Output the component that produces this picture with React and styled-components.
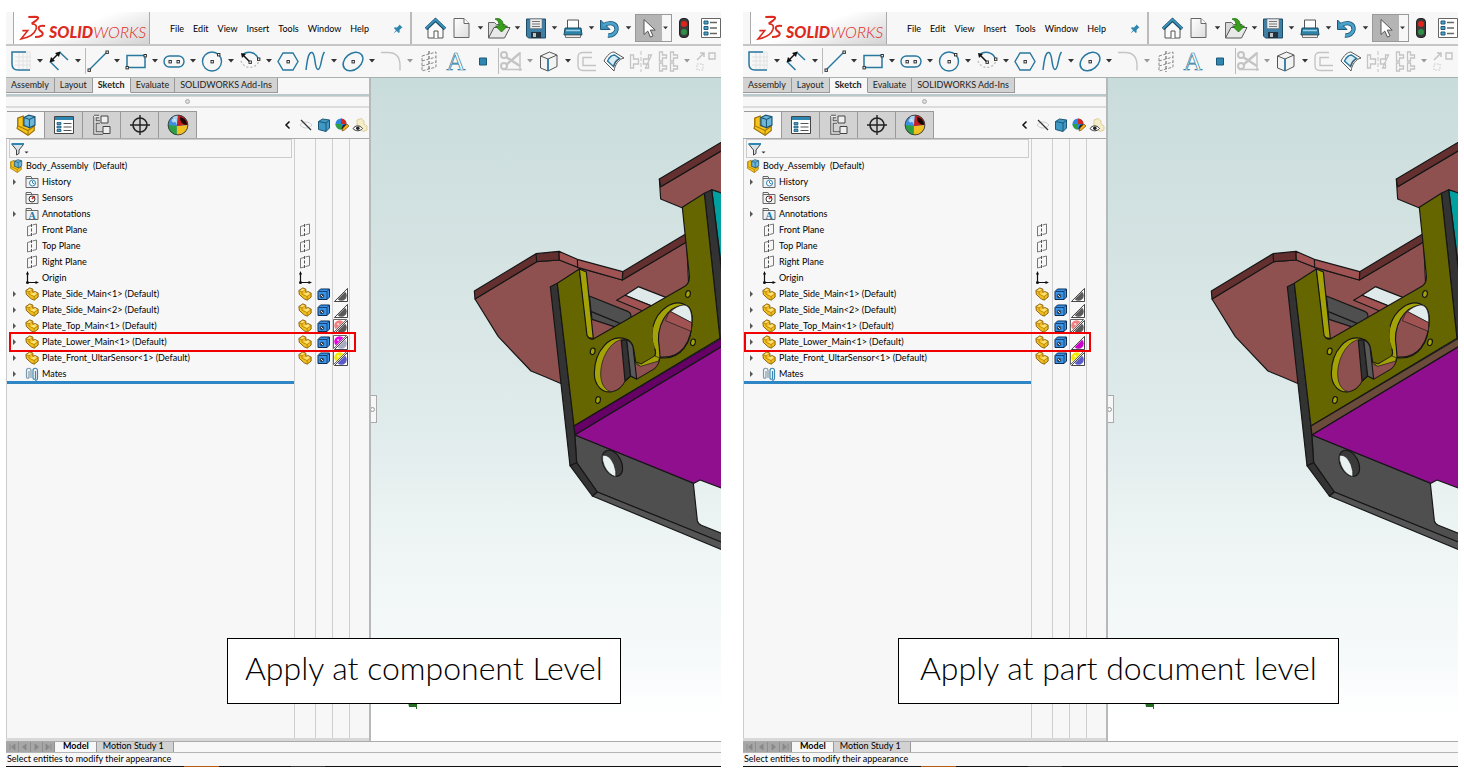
import React from 'react';
import styled, { createGlobalStyle, css } from 'styled-components';

const GlobalStyle = createGlobalStyle`
    *, *::before, *::after {
        box-sizing: border-box;
    }
    body {
        margin: 0;
        background: #fff;
        color: #000;
        font-family: Lato, "Open Sans", sans-serif;
        font-size: 9px;
        line-height: 12px;
    }
    button, input {
        font: inherit;
        color: inherit;
        margin: 0;
        padding: 0;
        border: 0;
        background: none;
    }
    svg {
        display: block;
        flex: none;
    }
    ul {
        list-style: none;
        margin: 0;
        padding: 0;
    }
`;

/* ---------- toolbar icons, 24 x 24 ---------- */

const blue = '#2878a0';
const grey = '#c4c4c4';

const Svg = ({ size = 24, children, ...rest }) => (
    <svg width={size} height={size} viewBox={`0 0 ${size} ${size}`} fill="none" overflow="visible" aria-hidden="true" {...rest}>
        {children}
    </svg>
);

const Dot = ({ x, y }) => <rect x={x - 1} y={y - 1} width="2.4" height="2.4" fill="#fff" stroke="#333" strokeWidth="1" />;

const icons = {
    home: (
        <>
            <path d="M5 11v11h15V11l-7.500-7z" fill="#fafafa" stroke="#555" />
            <path d="M11 22v-7h4v7" fill="#fff" stroke="#555" />
            <path d="M3 13l9.500-9 9.500 9" stroke="#174b66" strokeWidth="3.600" />
            <path d="M3 12.500l9.500-9 9.500 9" stroke="#3b93bd" strokeWidth="1.800" />
        </>
    ),
    page: (
        <>
            <path d="M4 2.500h10l5 5v14H4z" fill="url(#paper)" stroke="#666" />
            <path d="M14 2.500v5h5" fill="#fff" stroke="#666" />
        </>
    ),
    open: (
        <>
            <path d="M1.500 22V6.500h6l2 2H18V12" fill="#d8d8d8" stroke="#666" />
            <path d="M1.500 22L7 11.500h16L17.500 22z" fill="#e9e9e9" stroke="#555" />
            <path d="M8 3c5-1.500 8 1 8.500 7h4l-6 6-6-6h3.500c0-4-1-6-4-7z" fill="#3aa01c" stroke="#1f6e10" strokeWidth=".8" />
        </>
    ),
    save: (
        <>
            <path d="M2.500 3h19v19h-17l-2-2z" fill="#3e7fa3" stroke="#1d4a66" />
            <path d="M6 3h12v9.500H6z" fill="#ececec" stroke="#777" strokeWidth=".6" />
            <path d="M8 5.500h8M8 8h8M8 10.500h8" stroke="#777" />
            <path d="M7 16h10v6H7z" fill="#23333d" />
            <path d="M9 17h3v4H9z" fill="#b9c5cc" />
        </>
    ),
    print: (
        <>
            <path d="M6.500 12V4h11v8" fill="#fff" stroke="#555" />
            <path d="M4 12h16l1 7H3z" fill="#2d82a8" stroke="#174b66" />
            <path d="M5 14.500h14" stroke="#9fd0e4" strokeWidth="1.500" />
            <path d="M4.500 19h15v2.500h-15z" fill="#eee" stroke="#555" strokeWidth=".8" />
        </>
    ),
    undo: (
        <>
            <path d="M5 9.500c9-5 14-1 13.500 4 -.5 4-4.500 6.500-8.500 6" stroke="#1d5878" strokeWidth="4.400" />
            <path d="M2.500 4v9.500h9.500z" fill="#3b93bd" stroke="#1d5878" />
            <path d="M5 9.500c9-5 14-1 13.500 4 -.5 4-4.500 6.500-8.500 6" stroke="#4ba3cb" strokeWidth="2.600" />
        </>
    ),
    pointer: <path d="M8 3.500v15l3.800-3.400 2.600 6 2.600-1.200-2.700-5.800h4.900z" fill="#fff" stroke="#555" />,
    traffic: (
        <>
            <rect x="7.500" y="2.500" width="9" height="19" rx="3.500" fill="#3b3b3b" stroke="#222" />
            <circle cx="12" cy="8" r="3" fill="#e0241c" />
            <circle cx="12" cy="16" r="3" fill="#2f8f46" />
        </>
    ),
    options: (
        <>
            <path d="M2.500 2.500h19v19h-19z" fill="#fff" stroke="#666" />
            <path d="M5 5h4v3H5zM5 10.500h4v3H5zM5 16h4v3H5z" fill="#4ba3cb" stroke="#1d5878" />
            <path d="M11 6.500h7M11 12h7M11 17.500h7" stroke="#666" strokeWidth="1.500" />
        </>
    ),
    sketch: (
        <>
            <path d="M6 3h15v17M10 3v17M14 3v17M18 3v17M6 8h16M6 12h16M6 16h16" stroke="#e2e2e2" />
            <path d="M17 3H3v12c0 4 1.500 6 6 6h12" stroke={blue} strokeWidth="1.500" />
        </>
    ),
    dimension: (
        <>
            <path d="M11.500 21L3.500 13M12.500 3l8.500 8" stroke={blue} strokeWidth="1.500" />
            <path d="M4 12l8.500-8.500" stroke="#111" strokeWidth="1.500" />
            <path d="M2.500 13.500l1.500-5.500 4 4zM13.500 2.500L12 8 8 4z" fill="#111" />
        </>
    ),
    line: (
        <>
            <path d="M3 21L21 3" stroke={blue} strokeWidth="1.500" />
            <Dot x={3} y={21} />
            <Dot x={21} y={3} />
        </>
    ),
    rect: (
        <>
            <path d="M3 6.500h18v12H3z" stroke={blue} strokeWidth="1.500" />
            <Dot x={3} y={18.5} />
            <Dot x={21} y={6.5} />
        </>
    ),
    slot: (
        <>
            <rect x="2" y="7" width="20" height="11" rx="5.500" stroke={blue} strokeWidth="1.400" />
            <Dot x={8} y={12.5} />
            <Dot x={16} y={12.5} />
        </>
    ),
    circle: (
        <>
            <circle cx="12" cy="12.500" r="9.500" stroke={blue} strokeWidth="1.400" />
            <Dot x={12} y={12.5} />
            <Dot x={18.5} y={5.5} />
        </>
    ),
    arc: (
        <>
            <path d="M3 12a9.500 9.500 0 0 0 18 0" stroke="#bbb" strokeWidth="1.300" strokeDasharray="2 2" />
            <path d="M4 6.500C9 1 18 3 20.500 10" stroke={blue} strokeWidth="1.500" />
            <path d="M5 6l7 7" stroke="#111" strokeWidth="1.500" />
            <path d="M3 4l5 1-4 4z" fill="#111" />
            <Dot x={12} y={13} />
            <Dot x={20.5} y={10} />
        </>
    ),
    hexagon: (
        <>
            <path d="M7 4h10l5 8.500-5 8.500H7l-5-8.500z" stroke={blue} strokeWidth="1.400" />
            <Dot x={12} y={12.5} />
        </>
    ),
    spline: <path d="M3 21C4.500 8 6 3 9 3.500c4 1 2 16.500 6 17 3.500 0 3-14 6.500-17.500" stroke={blue} strokeWidth="1.500" />,
    ellipse: (
        <>
            <ellipse cx="12" cy="12.500" rx="11" ry="8" transform="rotate(-40 12 12.500)" stroke={blue} strokeWidth="1.500" />
            <Dot x={12} y={12.5} />
        </>
    ),
    fillet: <path d="M2 3.500h7c8 0 12 5 12 13v5" stroke={grey} strokeWidth="1.400" />,
    plane: (
        <>
            <path d="M5 7l14-4v15L5 22zM5 12l14-4M5 17l14-4" stroke="#888" strokeDasharray="3 1.500" />
            <path d="M12 2v21" stroke="#555" strokeDasharray="3 2" />
        </>
    ),
    text: (
        <text x="12" y="21" textAnchor="middle" fontFamily="Liberation Serif, serif" fontSize="26" fill="#fff" stroke={blue} strokeWidth=".7">
            A
        </text>
    ),
    point: <path d="M8.500 9h7v7h-7z" fill="#2f86b0" stroke="#1d5878" />,
    trim: (
        <>
            <path d="M3 20.500h20M21 3v19" stroke={grey} strokeWidth="1.400" />
            <path d="M7 8l14 9M7 16L21 4" stroke={grey} strokeWidth="2.400" />
            <circle cx="5" cy="6" r="3" stroke={grey} strokeWidth="2" />
            <circle cx="5" cy="17" r="3" stroke={grey} strokeWidth="2" />
        </>
    ),
    cube: (
        <>
            <path d="M3.500 7l9-4 7.500 3v11.500L11 22l-7.500-3z" fill="#f3f3f3" stroke="#555" />
            <path d="M3.500 7L11 10l9-4" stroke="#555" />
            <path d="M11 10v12" stroke={blue} strokeWidth="1.800" />
        </>
    ),
    offset: (
        <>
            <path d="M17 3.500H8c-4 0-5 2-5 5v8c0 4 2 5 5 5h13" stroke={grey} strokeWidth="1.400" />
            <path d="M17 8.500h-9v8h13" stroke={grey} strokeWidth="1.400" />
        </>
    ),
    surface: (
        <>
            <path d="M2 12C5 6 9 3 12 3l10 6c-5 1-9 6-10 13z" fill="#fff" stroke="#555" />
            <path d="M5.500 12c2-4 4.500-6 7-6l5 3.500c-3 1.500-5 4-6 8z" fill="#d9edf6" stroke={blue} strokeWidth="1.400" />
            <path d="M11.500 18c1-4 3-7 6-8.500" stroke="#555" />
        </>
    ),
    mirror: (
        <>
            <path d="M1.500 6h3v4l5 0v5h-5v4h-3zM22.500 6h-3v4l-5 0v5h5v4h-3z" stroke={grey} strokeWidth="1.300" />
            <path d="M12 2v21" stroke={grey} strokeDasharray="4 2" />
        </>
    ),
    pattern: (
        <path
            d="M3.500 3h3v3h4v3h-4v3h-3zM14.500 3h3v3h4v3h-4v3h-3zM3.500 14h3v3h4v3h-4v2h-3zM14.500 14h3v3h4v3h-4v2h-3z"
            stroke={grey}
            strokeWidth="1.300"
        />
    ),
    move: (
        <>
            <path d="M15 4h6v6h-6z" stroke={grey} strokeWidth="1.400" />
            <path d="M3 15h6v6H3z" stroke={grey} strokeDasharray="1.500 1.500" />
            <path d="M3 11l7-7M6 4h4v4" stroke={grey} strokeWidth="1.500" />
        </>
    ),
};

const Caret = ({ muted }) => (
    <svg width="14" height="6" viewBox="0 0 14 6" aria-hidden="true">
        <path d="M4 1h6L7 4.500z" fill={muted ? '#999' : '#333'} />
    </svg>
);

/* ---------- tree icons, 16 x 16 ---------- */

const PartIcon = ({ size = 16 }) => (
    <svg width={size} height={size} viewBox="0 0 16 16" aria-hidden="true">
        <path
            d="M1 4L5.500 1 9 2.500V6l2.500-.8L15 7v4.500L10.500 15 7 13.500 1.500 8.500z"
            fill="#f3bf22"
            stroke="#7d5600"
            strokeWidth="1"
            strokeLinejoin="round"
        />
        <path d="M1 4l3.500 1.500L9 2.500M4.500 5.500V8l6 3L15 7.500M10.500 11v4" fill="none" stroke="#a87800" strokeWidth=".8" />
        <path d="M5.500 2L8 3 4.500 4.800 2.500 4zM11.500 6l2 1.300L10.500 10 6 8z" fill="#ffe27a" />
    </svg>
);

const AssemblyIcon = ({ size = 16 }) => (
    <svg width={size} height={size} viewBox="0 0 16 16" aria-hidden="true">
        <path d="M2 3l4-1.500V8.500L14 9v3L9.500 15.500 1.500 10.500 2 8z" fill="#f6c61f" stroke="#9a6c00" strokeWidth=".8" />
        <path d="M2 8.500l7.500 3.500L14 9M9.500 12v3.500M2 3v5" fill="none" stroke="#a87800" strokeWidth=".8" />
        <path d="M6.500 2.500l3.500-1.700 4.500 1.200v6L10.500 10 6.500 8.300z" fill="#6fb7da" stroke="#1d5878" strokeWidth=".9" />
        <path d="M6.500 2.500l4 1.500 4-2M10.500 4V10" fill="none" stroke="#1d5878" strokeWidth=".8" />
    </svg>
);

const FolderIcon = ({ children }) => (
    <svg width="14" height="14" viewBox="0 0 14 14" fill="none" aria-hidden="true">
        <path d="M1 12.500V1.500h5l1 2h6v9z" fill="#f2f2f2" stroke="#666" />
        <path d="M1 3.500h7" stroke="#666" />
        {children}
    </svg>
);

const PlaneIcon = () => (
    <svg width="14" height="14" viewBox="0 0 14 14" fill="none" aria-hidden="true">
        <path d="M6 2.500L2.500 3.500V13L6 12M7.500 2l4-1v9.500l-4 1" stroke="#777" />
        <path d="M6.500 1v12" stroke="#555" strokeDasharray="3 1.500" />
    </svg>
);

const OriginIcon = () => (
    <svg width="14" height="14" viewBox="0 0 14 14" fill="none" aria-hidden="true">
        <path d="M2.500 2v9.500H12" stroke="#111" strokeWidth="1.200" />
        <path d="M2.500 0L1 3.500h3zM14 11.500L10.500 10v3z" fill="#111" />
        <circle cx="2.500" cy="11.500" r="1.500" fill="#111" />
    </svg>
);

const MatesIcon = () => (
    <svg width="14" height="14" viewBox="0 0 14 14" fill="none" aria-hidden="true">
        <path d="M4 4v6a1 1 0 0 1-2.500 0V3.500a2 2 0 0 1 4.500 0V11" stroke="#7b98aa" strokeWidth="1.200" />
        <path d="M10.500 4v7a1 1 0 0 1-2.500 0V3.500a2 2 0 0 1 4.500 0V11c0 2-1.500 2.500-2.500 2" stroke="#3c86b0" strokeWidth="1.200" />
    </svg>
);

const treeIcons = {
    assembly: <AssemblyIcon size={14} />,
    history: (
        <FolderIcon>
            <circle cx="7.500" cy="8" r="3" fill="#fff" stroke="#2f86b0" />
            <path d="M7.500 6v2l2 1" stroke="#2f86b0" />
        </FolderIcon>
    ),
    sensors: (
        <FolderIcon>
            <circle cx="7" cy="8" r="3" fill="#fff" stroke="#333" />
            <path d="M7 8l2.500-3" stroke="#d22" strokeWidth="1.500" />
        </FolderIcon>
    ),
    annotations: (
        <FolderIcon>
            <text x="7" y="12" textAnchor="middle" fontFamily="Liberation Serif, serif" fontWeight="700" fontSize="10" fill="#1f78a8">
                A
            </text>
        </FolderIcon>
    ),
    plane: <PlaneIcon />,
    origin: <OriginIcon />,
    part: <PartIcon size={14} />,
    mates: <MatesIcon />,
};

const DisplayCube = () => (
    <svg width="13" height="14" viewBox="0 0 13 14" aria-hidden="true">
        <path d="M1 4.500L3.500 2h9v8L10 12.500H1z" fill="#3a94ea" stroke="#0c2d55" />
        <path d="M1.500 4.500H10v8M10 4.500L12.500 2" fill="none" stroke="#0c2d55" strokeWidth=".8" />
        <circle cx="5" cy="9" r="1.800" fill="#cfe3f7" stroke="#111" strokeWidth=".8" />
        <path d="M4 10l2-2" stroke="#111" strokeWidth=".8" />
    </svg>
);

const Swatch = ({ upper, lower }) => (
    <svg width="15" height="15" viewBox="0 0 16 16" aria-hidden="true">
        {upper && (
            <>
                <path d="M.5.5h14L.5 14.500z" fill="#fff" stroke="#555" />
                <path d="M3 11a5.500 5.500 0 0 1 8-8z" fill={upper} />
                <circle cx="5.500" cy="5.500" r="1.200" fill="#fff" opacity=".7" />
            </>
        )}
        <path d="M15.500 1.500v14h-14z" fill="#fff" stroke="#333" />
        <path d="M13 5a5.500 5.500 0 0 1-8 8z" fill={lower} />
    </svg>
);

const BallIcon = ({ size }) => (
    <svg width={size} height={size} viewBox="0 0 20 20" aria-hidden="true">
        <circle cx="10" cy="10" r="9" fill="#3d8fe0" />
        <path d="M10 1a9 9 0 0 0-5 1.500L9 10z" fill="#a9d4ef" />
        <path d="M1 10a9 9 0 0 0 8 9V11z" fill="#2ea043" />
        <path d="M9 19a9 9 0 0 0 10-9l-10 1z" fill="#f0c020" />
        <path d="M10 1a9 9 0 0 1 9 9c-3 0-6 .5-10 1z" fill="#c81e1e" />
        <path d="M12 3c4 .5 6.500 4 6 7-4-.5-6.500-3-6-7z" fill="#160606" />
        <circle cx="6" cy="6" r="1.800" fill="#fff" opacity=".6" />
        <circle cx="10" cy="10" r="9" fill="none" stroke="#333" strokeWidth=".8" />
    </svg>
);

const AppearanceIcon = () => (
    <svg width="14" height="14" viewBox="0 0 14 14" aria-hidden="true">
        <circle cx="6" cy="6" r="5.500" fill="#2f86de" />
        <path d="M6 .5A5.500 5.500 0 0 1 11.500 6H6z" fill="#d22a1e" />
        <path d="M.5 6A5.500 5.500 0 0 0 6 11.500V6z" fill="#2ea043" />
        <path d="M6 11.500L8 7l3.500-1-2 4z" fill="#222" />
        <path d="M7 13l1-3 4-4 2 2-4.500 4z" fill="#f0b020" stroke="#7a4d00" strokeWidth=".7" />
    </svg>
);

const PropertyIcon = () => (
    <svg width="22" height="22" viewBox="0 0 22 22" fill="none" aria-hidden="true">
        <path d="M1.500 2.500h19v17h-19z" fill="#fff" stroke="#444" />
        <path d="M2 3h18v3H2z" fill="#2f86b0" />
        <path d="M4 8.500h4v2H4zM4 12h4v2H4zM4 15.500h4v2H4z" fill="#4ba3cb" stroke="#1d5878" strokeWidth=".8" />
        <path d="M10.500 9.500h8M10.500 13h8M10.500 16.500h8" stroke="#555" strokeWidth="1.200" />
    </svg>
);

const ConfigIcon = () => (
    <svg width="22" height="22" viewBox="0 0 22 22" fill="none" aria-hidden="true">
        <path d="M4 2v17h8M4 8h5M3 2.500h5" stroke="#555" strokeWidth="3.400" />
        <path d="M4 2v17h8M4 8h5M3 2.500h5" stroke="#e8e8e8" strokeWidth="1.400" />
        <path d="M10 2h7v7h-7zM12 12.500h7v7h-7z" fill="#eee" stroke="#444" />
    </svg>
);

const DimXpertIcon = () => (
    <svg width="22" height="22" viewBox="0 0 22 22" fill="none" aria-hidden="true">
        <circle cx="11" cy="11" r="7" stroke="#222" strokeWidth="1.600" />
        <path d="M11 1v20M1 11h20" stroke="#222" strokeWidth="1.400" />
    </svg>
);

const PinIcon = () => (
    <svg width="10" height="10" viewBox="0 0 10 10" aria-hidden="true">
        <path d="M6.500 .5L9.500 3.500l-1 .5-2 2 .2 2.300-1 .7L3.800 7 .5 9.500 3 6.200 1 4.300l.7-1L4 3.500l2-2z" fill="#2f86b0" />
    </svg>
);

const DassaultMark = () => (
    <svg width="27" height="27" viewBox="0 0 81 81" fill="none" stroke="#dd2a1e" strokeWidth="6" aria-hidden="true">
        <path d="M28 6l22-1q14 1 2 11L38 26" />
        <path d="M38 27q18-1 13 16Q43 66 6 72l20-25H10" strokeWidth="5" />
        <path d="M78 33q-20-3-19 7 1 5 8 10 8 6 1 12-6 4-20 4" />
    </svg>
);

/* ---------- menu bar ---------- */

const MenuBar = styled.header`
    display: flex;
    height: 34px;
    overflow: hidden;
    background: #f7f7f7;
    border-bottom: 2px solid #c6c6c6;
`;

const Brand = styled.div`
    display: flex;
    flex: none;
    align-items: center;
    gap: 3px;
    width: 137px;
    margin-left: 7px;
    padding-left: 5px;
    border-left: 1px solid #aaa;
    border-right: 1px solid #aaa;
    background: linear-gradient(160deg, #fff 45%, #d4d4d4);
    color: #dd2a1e;
    font: italic 300 16px/20px Lato, sans-serif;

    span {
        padding-top: 8px;
    }
    b {
        font-weight: 900;
    }
`;

const Menu = styled.nav`
    display: flex;
    flex: none;
    align-items: center;
    gap: 9px;
    width: 262px;
    padding: 2px 7px 0 20px;
    border-right: 2px solid #bbb;

    button:last-child {
        margin-left: auto;
    }
`;

const Tools = styled.div`
    display: flex;
    align-items: center;
    min-width: 0;
    padding-left: ${(p) => p.$indent}px;
`;

const Toolbar = styled.div`
    display: flex;
    height: 32px;
    padding-bottom: 1px;
    overflow: hidden;
    background: #f7f7f7;
    border-bottom: 1px solid #a8b0b0;
`;

const Tool = styled.button`
    display: flex;
    flex: none;
    align-items: center;
    height: 28px;
    margin-right: ${(p) => (p.$spaced ? '3px' : 0)};

    svg + svg {
        width: ${(p) => p.$caret}px;
    }
    ${(p) =>
        p.$pressed &&
        css`
            border: 1px solid #999;
            background: linear-gradient(to right, #b4b4b4 26px, #f7f7f7 26px);
            svg + svg {
                width: 11px;
            }
        `}
`;

const Divider = styled.i`
    flex: none;
    width: 1px;
    height: 26px;
    background: #bbb;
`;

const fileTools = [
    { name: 'home' },
    { name: 'page', split: true },
    { name: 'open', split: true },
    { name: 'save', split: true },
    { name: 'print', split: true },
    { name: 'undo', split: true },
    { name: 'pointer', split: true, pressed: true },
    { name: 'traffic' },
    { name: 'options' },
];

const sketchTools = [
    { name: 'sketch', split: true },
    { name: 'dimension', split: true },
    null,
    { name: 'line', split: true },
    { name: 'rect', split: true },
    { name: 'slot', split: true },
    { name: 'circle', split: true },
    { name: 'arc', split: true },
    { name: 'hexagon' },
    { name: 'spline', split: true },
    { name: 'ellipse', split: true },
    { name: 'fillet', split: true, muted: true },
    { name: 'plane' },
    { name: 'text' },
    { name: 'point' },
    null,
    { name: 'trim', split: true, muted: true },
    { name: 'cube', split: true },
    { name: 'offset' },
    { name: 'surface' },
    { name: 'mirror' },
    { name: 'pattern', split: true, muted: true },
    { name: 'move' },
];

const ToolList = ({ tools, caret, indent }) => (
    <Tools $indent={indent}>
        {tools.map((tool, i) =>
            tool ? (
                <Tool key={tool.name} $spaced={!tool.split} $caret={caret} $pressed={tool.pressed} aria-label={tool.name}>
                    <Svg>{icons[tool.name]}</Svg>
                    {tool.split && <Caret muted={tool.muted} />}
                </Tool>
            ) : (
                <Divider key={i} />
            )
        )}
    </Tools>
);

/* ---------- side panel ---------- */

const Body = styled.div`
    display: flex;
    flex: 1;
    min-height: 0;
`;

const Side = styled.aside`
    display: flex;
    flex: none;
    flex-direction: column;
    width: 365px;
    border-right: 2px solid #b5b9b9;
    background: #f7f7f7;
`;

const CommandTabs = styled.div`
    display: flex;
    height: 18px;
    padding-bottom: 1px;
    border-bottom: 2px solid #b9c8ca;
`;

const CommandTab = styled.button`
    padding: 0 5px;
    border-right: 1px solid #999;
    border-bottom: 1px solid ${(p) => (p.$active ? '#f7f7f7' : '#999')};
    background: ${(p) => (p.$active ? '#f7f7f7' : '#d2d2d2')};
    color: #222;
    font-weight: ${(p) => (p.$active ? 700 : 400)};
    white-space: nowrap;
`;

const Splitter = styled.div`
    display: flex;
    align-items: center;
    justify-content: center;
    height: 12px;
    margin-bottom: 3px;
    border-top: 1px solid #d5d5d5;
    border-bottom: 2px solid #dcdcdc;

    &::after {
        content: '';
        width: 5px;
        height: 5px;
        border: 1px solid #aaa;
        border-radius: 50%;
        background: #ddd;
    }
`;

const ManagerRow = styled.div`
    display: flex;
    height: 28px;
    padding-left: 1px;
    border-bottom: 1px solid #aaa;
`;

const ManagerTab = styled.button`
    display: flex;
    align-items: center;
    justify-content: center;
    width: 38px;
    border-top: 1px solid #999;
    border-right: 1px solid #999;
    background: ${(p) => (p.$active ? '#f7f7f7' : '#d2d2d2')};
`;

const PaneHeads = styled.div`
    display: flex;
    align-items: center;
    gap: 4px;
    margin-left: auto;
    padding-right: 2px;
`;

const columnLine = 'linear-gradient(#cecece, #cecece)';

const Tree = styled.div`
    flex: 1;
    min-height: 320px;
    border-left: 1px solid #ccc;
    background: ${columnLine} 287px 0 / 1px 100% no-repeat, ${columnLine} 308px 0 / 1px 100% no-repeat,
        ${columnLine} 325px 0 / 1px 100% no-repeat, ${columnLine} 342px 0 / 1px 100% no-repeat;
`;

const Filter = styled.label`
    display: flex;
    align-items: center;
    width: 283px;
    height: 19px;
    margin: 0 0 0 2px;
    padding-left: 1px;
    border: 1px solid #ccc;

    input {
        flex: 1;
        min-width: 0;
        outline: 0;
    }
`;

const Row = styled.li`
    position: relative;
    display: grid;
    grid-template-columns: 288px 20px 17px 17px;
    align-items: center;
    justify-items: center;
    height: 16px;

    /* red callout frame around the component being discussed */
    ${(p) =>
        p.$frame !== undefined &&
        css`
            z-index: 1;

            &::after {
                content: '';
                position: absolute;
                top: -2px;
                left: ${p.$frame}px;
                width: 347px;
                height: 20px;
                border: 2px solid #f00000;
            }
        `}
`;

const Name = styled.span`
    display: flex;
    align-items: center;
    gap: 3px;
    justify-self: stretch;
    padding-left: ${(p) => (p.$root ? '2px' : '4px')};
    white-space: pre;
`;

const Twisty = styled.i`
    width: 11px;
    height: 6px;
    background: ${(p) => (p.$shown ? '#555' : 'transparent')};
    clip-path: polygon(2px 0, 5px 3px, 2px 6px);
`;

const Rollback = styled.div`
    width: 287px;
    height: 3px;
    margin-top: -1px;
    background: #2f86c4;
`;

const SideFoot = styled.div`
    height: 3px;
    background: #d8d8d8;
`;

const managerTabs = [
    ['Feature tree', <AssemblyIcon size={22} />],
    ['Properties', <PropertyIcon />],
    ['Configurations', <ConfigIcon />],
    ['Dimensions', <DimXpertIcon />],
    ['Display', <BallIcon size={22} />],
];

const plain = { lower: '#5a5a5a' };

const treeRows = [
    { name: 'Body_Assembly  (Default)', icon: 'assembly', root: true },
    { name: 'History', icon: 'history', open: true },
    { name: 'Sensors', icon: 'sensors' },
    { name: 'Annotations', icon: 'annotations', open: true },
    { name: 'Front Plane', icon: 'plane', state: 'plane' },
    { name: 'Top Plane', icon: 'plane', state: 'plane' },
    { name: 'Right Plane', icon: 'plane', state: 'plane' },
    { name: 'Origin', icon: 'origin', state: 'origin' },
    { name: 'Plate_Side_Main<1> (Default)', icon: 'part', open: true, swatch: plain },
    { name: 'Plate_Side_Main<2> (Default)', icon: 'part', open: true, swatch: plain },
    { name: 'Plate_Top_Main<1> (Default)', icon: 'part', open: true, swatch: { upper: '#f08080', lower: '#5a5a5a' } },
    { name: 'Plate_Lower_Main<1> (Default)', icon: 'part', open: true, framed: true },
    { name: 'Plate_Front_UltarSensor<1> (Default)', icon: 'part', open: true, swatch: { upper: '#f5e800', lower: '#5a5ac8' } },
    { name: 'Mates', icon: 'mates', open: true },
];

const SidePanel = ({ swatch, frame }) => (
    <Side>
        <CommandTabs>
            {['Assembly', 'Layout', 'Sketch', 'Evaluate', 'SOLIDWORKS Add-Ins'].map((tab) => (
                <CommandTab key={tab} $active={tab === 'Sketch'}>
                    {tab}
                </CommandTab>
            ))}
        </CommandTabs>
        <Splitter />
        <ManagerRow>
            {managerTabs.map(([label, icon], i) => (
                <ManagerTab key={label} $active={i === 0} aria-label={label}>
                    {icon}
                </ManagerTab>
            ))}
            <PaneHeads>
                <Svg size={14}>
                    <path d="M8.500 3.500L5 7l3.500 3.500" stroke="#111" strokeWidth="1.500" />
                </Svg>
                <Svg size={14}>
                    <path d="M1 7c3-4 9-4 12 0-3 4-9 4-12 0z" stroke="#ccc" />
                    <path d="M2 2l10 10" stroke="#333" strokeWidth="1.300" />
                </Svg>
                <Svg size={14}>
                    <path d="M1.500 3.500l4-2.500 7 1V10l-3.500 3.500-7.500-2z" fill="#3f97c4" stroke="#1d5878" />
                    <path d="M1.500 3.500L9 5l3.500-3M9 5v8.500" stroke="#1d5878" />
                </Svg>
                <AppearanceIcon />
                <Svg size={14}>
                    <path d="M4 2l4-1.500L11 3v3l3 2v4l-4 1.500L4 9z" fill="#f5ecc8" stroke="#dccf9f" />
                    <path d="M0 10.500c2.500-3.500 7-3.500 9.500 0-2.500 3-7 3-9.500 0z" fill="#fff" stroke="#333" />
                    <circle cx="4.800" cy="10.300" r="1.800" fill="#222" />
                </Svg>
            </PaneHeads>
        </ManagerRow>
        <Tree>
            <Filter>
                <svg width="20" height="14" viewBox="0 0 20 14" aria-hidden="true">
                    <path d="M1 2.500L5.500 8v5l2.500-1.500V8l4.500-5.500z" fill="#d9e3e8" stroke="#444" />
                    <path d="M.5 1h12.500v2H.5z" fill="#2f86b0" />
                    <path d="M13.500 9.500h4l-2 2z" fill="#333" />
                </svg>
                <input type="text" aria-label="Filter tree" />
            </Filter>
            <ul>
                {treeRows.map((row) => {
                    const look = row.framed ? swatch : row.swatch;
                    return (
                        <Row key={row.name} $frame={row.framed ? frame : undefined}>
                            <Name $root={row.root}>
                                {!row.root && <Twisty $shown={row.open} />}
                                {treeIcons[row.icon]}
                                {row.name}
                            </Name>
                            {row.state && treeIcons[row.state]}
                            {look && (
                                <>
                                    {treeIcons.part}
                                    <DisplayCube />
                                    <Swatch {...look} />
                                </>
                            )}
                        </Row>
                    );
                })}
            </ul>
            <Rollback />
        </Tree>
        <SideFoot />
    </Side>
);

/* ---------- graphics area ---------- */

const Viewport = styled.main`
    position: relative;
    flex: 1;
    min-width: 0;
    overflow: hidden;
    background: linear-gradient(#c9dcdc, #d4e3e2 25%, #e0ebeb 52%, #eff5f5 71%, #f5f9fa 86%, #fff 96%);
`;

const PanelHandle = styled.button`
    position: absolute;
    top: 317px;
    left: -2px;
    display: flex;
    align-items: center;
    justify-content: center;
    width: 8px;
    height: 28px;
    border: 1px solid #aaa;
    border-left: 0;
    background: #f7f7f7;

    &::after {
        content: '';
        width: 5px;
        height: 5px;
        border: 1px solid #999;
        border-radius: 50%;
    }
`;

const wall = '#a3a308';
const plate = '#8f5050';
const plateEdge = '#632f2f';
const plateLight = '#a15353';

const Model = ({ edge }) => (
    <svg width="350" height="663" viewBox="0 0 350 663" role="img" aria-label="Body assembly model">
        <g transform="translate(89 52) scale(.33333)" stroke="#161616" strokeWidth="3.500" strokeLinejoin="round">
            {/* rear plate */}
            <path d="M45 507L230 395l68-5 55 22 134 38 193-115 15 330-300 135-140-60-42-17-98-103z" fill={plate} />
            <path d="M43 483l185-112 2 24L45 507zM228 371l69-7 1 26-68 5zM488 425l190-114v26L487 450z" fill={plateEdge} />
            <path d="M297 364l55 24 1 24-55-22zM352 388l136 37-1 25-134-38z" fill={plateLight} />
            <path d="M388 498l117 47q10 5 7 18l-40 30-76-25z" fill="#4f4f4f" />
            <path d="M394 545l88 36" fill="none" />
            <path d="M495 496l40-26 230 90-20 36z" fill="#dfe9e9" />
            <path d="M470 511l25-15 250 100v28z" fill={plateLight} />
            {/* upper plate */}
            <path d="M602 170L783 63h10v140h-60l-67 30-64-26-4-60z" fill={plate} />
            <path d="M598 147L793 31v26L602 170z" fill={plateEdge} />
            <path d="M755 179l40 14v300z" fill="#00a0a0" />
            <path d="M733 190l22-11 40 330v130l-15-14z" fill="#333" />
            {/* side plate */}
            <path d="M345 915l355 145 12 112q2 10 12 14l69 27v28l-381-155-62-88z" fill="#4f4f4f" />
            <path d="M397 1098l15-12 381 154v22z" fill="#555" />
            <path d="M271 470l21-10 50 428 8 110-20 9z" fill="#333" />
            <path d="M330 1007l20-9 62 88-15 12z" fill="#333" />
            {/* front sensor plate */}
            <path
                d="M292 460l66-43 25 195q2 18 17 15l276-159q14-10 12-31L667 232l66-42 47 435-438 263z"
                fill="#666600"
            />
            <path d="M358 417l21 9 21 200-14-3-5-7z" fill={wall} />
            <path
                d="M505 630C450 604 403 665 403 730c0 40 27 60 52 55 20-4 33-18 40-32l17-15 18 9 50-29q15-10 20-35c60 8 98-40 96-120-2-42-40-56-76-33-45 30-52 90-38 120l5 20-45 28-15-8-6-38z"
                fill={wall}
            />
            <path
                d="M505 630c-38-14-84 40-83 105 1 28 14 48 33 50 20-4 33-18 40-32l17-15 18 9 50-29q15-10 17-28l-14-6-43 24-14-7-6-40z"
                fill={plate}
                strokeWidth="2"
            />
            <path d="M484 632l16-3 12 109-17 15z" fill="#333" />
            <path d="M500 629q22 10 20 30l10 88-18-9z" fill="#5a5a5a" />
            {/* bridge between the two holes */}
            <path d="M505 630q14 10 16 28l6 38 17 6 38-22q10-8 3-25-14-30-5-66l-40 8z" fill="#666600" stroke="none" />
            <path d="M505 630q14 10 16 28l6 38 17 6 38-22q8-8 2-25" fill="none" />
            <path d="M527 697l17 5 40-24 14 5-2 10-54 16z" fill={wall} strokeWidth="2" />
            <path d="M670 525c-50 5-84 65-72 128l2 28c62 6 98-41 96-121-2-25-10-35-26-35z" fill={plate} />
            <path d="M670 525c-14 2-27 9-38 20l63 33c2-35-8-53-25-53z" fill="#e3eced" strokeWidth="2" />
            <path d="M625 552l7-7 63 33-1 26-78-32z" fill={plateLight} strokeWidth="2" />
            {[
                [398, 664],
                [414, 810],
                [699, 637],
                [684, 492],
            ].map(([x, y]) => (
                <ellipse key={x} cx={x} cy={y} rx="7" ry="10" transform={`rotate(15 ${x} ${y})`} fill={wall} />
            ))}
            {/* lower plate */}
            <path d="M342 888l451-268v25L345 915z" fill={edge} />
            <path d="M345 915l448-270v432l-73-27-18 10z" fill="#8f0f8f" />
            {/* mounting hole */}
            <ellipse cx="457" cy="1000" rx="27" ry="42" transform="rotate(-28 457 1000)" fill="#3a3a3a" />
            <path d="M428 976q20-4 34 28 8 22 5 36-22-6-34-32-8-18-5-32z" fill="#e9f0f0" strokeWidth="2" />
        </g>
        <path d="M37 624h8v5h-7zM45 624h3v2h-2v5h-1v-5z" fill="#246b24" />
    </svg>
);

/* ---------- bottom bars ---------- */

const StudyTabs = styled.div`
    display: flex;
    height: 12px;
    border-top: 1px solid #aaa;
    border-bottom: 1px solid #b5b5b5;
    background: #f7f7f7;
    line-height: 8px;
`;

const Steppers = styled.div`
    display: flex;
    width: 49px;
    padding-left: 1px;
    background: #a6a6a6;

    button {
        display: flex;
        align-items: center;
        justify-content: center;
        width: 12px;
        border-right: 1px solid #8f8f8f;
    }
`;

const StudyTab = styled.button`
    padding: 0 ${(p) => (p.$active ? 7 : 9)}px 2px ${(p) => (p.$active ? 8 : 6)}px;
    border-right: 1px solid #999;
    background: ${(p) => (p.$active ? '#f7f7f7' : '#d2d2d2')};
    font-weight: ${(p) => (p.$active ? 700 : 400)};
`;

const Status = styled.footer`
    height: 13px;
    padding-left: 1px;
    background: #f7f7f7;
`;

const TaskStrip = styled.div`
    height: 1px;
    background: linear-gradient(to right, #111 178px, #b35a14 178px 213px, #111 213px 285px, #333 285px 319px, #111 319px);
`;

/* ---------- page ---------- */

const Page = styled.div`
    display: grid;
    grid-template-columns: repeat(2, minmax(0, 1fr));
    gap: 22px;
    min-height: 100vh;
    padding: 12px 6px 6px;
`;

const Frame = styled.section`
    position: relative;
    display: flex;
    flex-direction: column;
    min-width: 0;
`;

const Caption = styled.div`
    position: absolute;
    bottom: 63px;
    left: ${(p) => p.$left}px;
    padding: 0 ${(p) => p.$pad}px 6px;
    border: 1px solid #000;
    background: #fff;
    color: #000;
    font: 300 32px/58px Lato, sans-serif;
    white-space: nowrap;
`;

const stepShapes = ['M2 1v6M7 1L3.500 4 7 7z', 'M6 1L2.500 4 6 7z', 'M3 1l3.500 3L3 7z', 'M7 1v6M2 1l3.500 3L2 7z'];

const AppWindow = ({ caption, captionLeft, captionPad, swatch, frame, edge }) => (
    <Frame>
        <MenuBar>
            <Brand>
                <DassaultMark />
                <span>
                    <b>SOLID</b>WORKS
                </span>
            </Brand>
            <Menu>
                {['File', 'Edit', 'View', 'Insert', 'Tools', 'Window', 'Help'].map((item) => (
                    <button key={item}>{item}</button>
                ))}
                <button aria-label="Pin menu">
                    <PinIcon />
                </button>
            </Menu>
            <ToolList tools={fileTools} caret={13} indent={11} />
        </MenuBar>
        <Toolbar>
            <ToolList tools={sketchTools} caret={14} indent={3} />
        </Toolbar>
        <Body>
            <SidePanel swatch={swatch} frame={frame} />
            <Viewport>
                <Model edge={edge} />
                <PanelHandle aria-label="Collapse panel" />
            </Viewport>
        </Body>
        <StudyTabs>
            <Steppers>
                {stepShapes.map((d) => (
                    <button key={d} aria-label="Scroll tabs">
                        <svg width="9" height="8" viewBox="0 0 9 8" aria-hidden="true">
                            <path d={d} fill="#888" stroke="#888" strokeWidth=".8" />
                        </svg>
                    </button>
                ))}
            </Steppers>
            <StudyTab $active>Model</StudyTab>
            <StudyTab>Motion Study 1</StudyTab>
        </StudyTabs>
        <Status>Select entities to modify their appearance</Status>
        <TaskStrip />
        <Caption $left={captionLeft} $pad={captionPad}>
            {caption}
        </Caption>
    </Frame>
);

const App = () => {
    return (
        <>
            <GlobalStyle />
            <Page>
                <AppWindow
                    caption="Apply at component Level"
                    captionLeft={221}
                    captionPad={17}
                    swatch={{ upper: '#e800e8', lower: '#a8a8c0' }}
                    frame={2}
                    edge="#660066"
                />
                <AppWindow
                    caption="Apply at part document level"
                    captionLeft={155}
                    captionPad={21}
                    swatch={{ lower: '#c800c8' }}
                    frame={0}
                    edge="#6b4c3a"
                />
            </Page>
            <svg width="0" height="0" aria-hidden="true">
                <linearGradient id="paper" x1="0" y1="0" x2="1" y2="1">
                    <stop offset="0" stopColor="#fff" />
                    <stop offset="1" stopColor="#ddd" />
                </linearGradient>
            </svg>
        </>
    );
};

export default App;
